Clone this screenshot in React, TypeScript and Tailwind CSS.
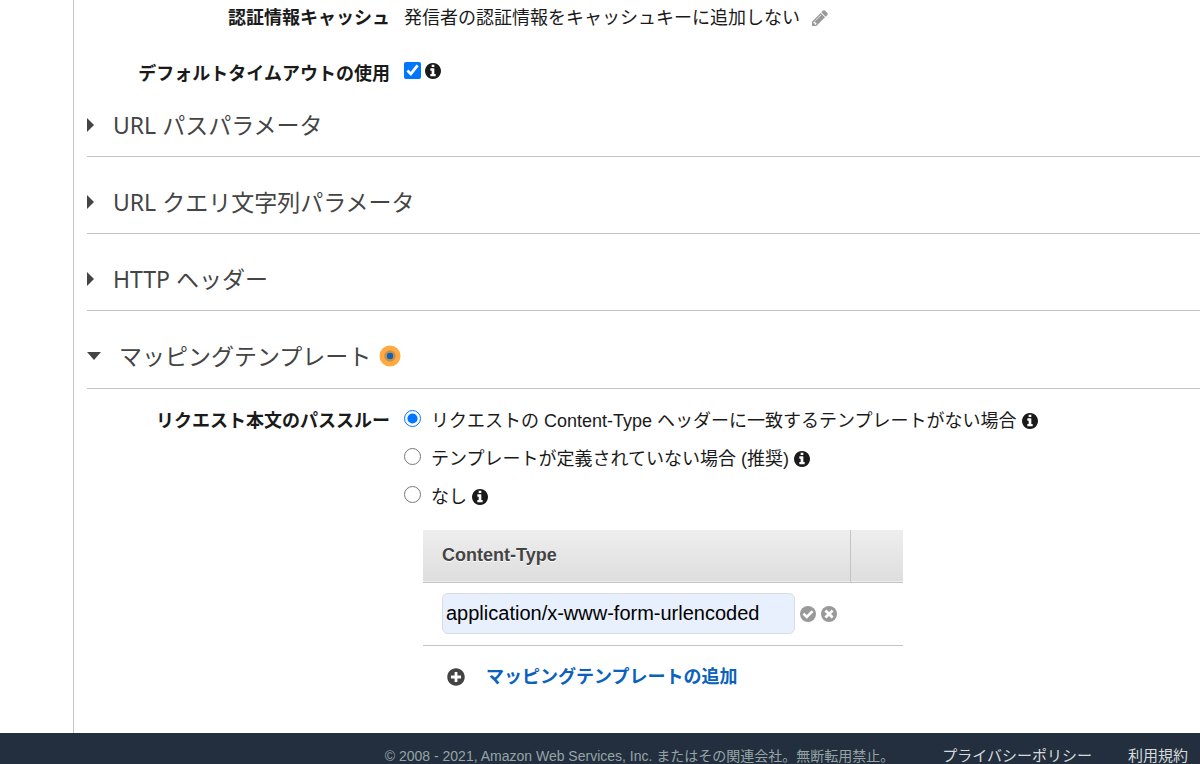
import { useState } from "react";
import type { JSX, ReactNode } from "react";
import { FaPlusCircle } from "react-icons/fa";

const passthroughOptions = [
    { id: "no-match", text: "リクエストの Content-Type ヘッダーに一致するテンプレートがない場合" },
    { id: "no-templates", text: "テンプレートが定義されていない場合 (推奨)" },
    { id: "never", text: "なし" },
];

function InfoButton(): JSX.Element {
    return (
        <button type="button" aria-label="情報" className="shrink-0 text-[#1a1a1a]">
            <svg viewBox="0 0 1536 1536" className="size-4" fill="currentColor">
                <path d="M1024 1248v-160q0-14-9-23t-23-9h-96v-512q0-14-9-23t-23-9h-320q-14 0-23 9t-9 23v160q0 14 9 23t23 9h96v320h-96q-14 0-23 9t-9 23v160q0 14 9 23t23 9h448q14 0 23-9t9-23zm-128-896v-160q0-14-9-23t-23-9h-192q-14 0-23 9t-9 23v160q0 14 9 23t23 9h192q14 0 23-9t9-23zm640 416q0 209-103 385.5t-279.5 279.5-385.5 103-385.5-103-279.5-279.5-103-385.5 103-385.5 279.5-279.5 385.5-103 385.5 103 279.5 279.5 103 385.5z" />
            </svg>
        </button>
    );
}

function Collapsed({ children }: { children: ReactNode }): JSX.Element {
    return (
        <h2 className="border-b border-[#c4c4c4] pb-[18px] text-[23px] leading-[26px]">
            <button type="button" aria-expanded="false" className="flex items-center">
                <svg viewBox="0 0 7 14" className="mr-[19px] h-3.5 w-[7px]" fill="currentColor">
                    <path d="M0 0 7 7 0 14z" />
                </svg>
                {children}
            </button>
        </h2>
    );
}

function Integration(): JSX.Element {
    const [passthrough, setPassthrough] = useState("no-match");

    return (
        <main className="ml-[73px] border-l border-[#c4c4c4] pt-1.5 pb-11 pl-[13px]">
            <div className="flex leading-6">
                <div className="w-[303px] shrink-0 text-right font-bold">認証情報キャッシュ</div>
                <div className="ml-3.5 flex items-center gap-3">
                    発信者の認証情報をキャッシュキーに追加しない
                    <button type="button" aria-label="編集" className="text-[#999]">
                        <svg viewBox="0 0 1536 1536" className="size-4" fill="currentColor">
                            <path d="M363 1408l91-91-235-235-91 91v107h128v128h107zm523-928q0-22-22-22-10 0-17 7l-542 542q-7 7-7 17 0 22 22 22 10 0 17-7l542-542q7-7 7-17zm-54-192l416 416-832 832h-416v-416zm683 96q0 53-37 90l-166 166-416-416 166-165q36-38 90-38 53 0 91 38l235 234q37 39 37 91z" />
                        </svg>
                    </button>
                </div>
            </div>
            <div className="mt-8 flex leading-6">
                <label htmlFor="timeout" className="w-[303px] shrink-0 text-right font-bold">デフォルトタイムアウトの使用</label>
                <div className="ml-3.5 flex h-[17px] items-end gap-1">
                    <input id="timeout" type="checkbox" defaultChecked className="size-[17px] accent-[#0075ff]" />
                    <InfoButton />
                </div>
            </div>

            <div className="mt-[26px] flex flex-col gap-8 text-[#444]">
                <Collapsed>URL パスパラメータ</Collapsed>
                <Collapsed>URL クエリ文字列パラメータ</Collapsed>
                <Collapsed>HTTP ヘッダー</Collapsed>
                <h2 className="flex items-center border-b border-[#c4c4c4] pb-[19px] text-[23px] leading-[26px]">
                    <button type="button" aria-expanded="true" className="flex items-center">
                        <svg viewBox="0 0 14 8" className="mr-[18px] h-2 w-3.5" fill="currentColor">
                            <path d="M0 0h14L7 8z" />
                        </svg>
                        マッピングテンプレート
                    </button>
                    <svg viewBox="0 0 22 22" className="ml-2 size-[22px]">
                        <circle cx="11" cy="11" r="10.5" fill="#ffab40" />
                        <circle cx="11" cy="11" r="5.8" fill="#c98f4c" />
                        <circle cx="11" cy="11" r="3.2" fill="#0a62bd" />
                    </svg>
                </h2>
            </div>

            <div role="radiogroup" aria-labelledby="passthrough" className="mt-5 flex leading-6">
                <div id="passthrough" className="w-[303px] shrink-0 text-right font-bold">リクエスト本文のパススルー</div>
                <div className="ml-3.5 flex flex-col gap-3.5">
                    {passthroughOptions.map((option) => (
                        <div key={option.id} className="flex items-center gap-[5px]">
                            <label className="flex items-start gap-2.5">
                                <input
                                    type="radio"
                                    name="passthrough"
                                    checked={passthrough === option.id}
                                    onChange={() => setPassthrough(option.id)}
                                    className="mt-px size-[17px] accent-[#0075ff]"
                                />
                                {option.text}
                            </label>
                            <InfoButton />
                        </div>
                    ))}
                </div>
            </div>

            <div className="mt-[21px] ml-[336px] w-[480px]">
                <table className="w-full border-collapse">
                    <thead>
                        <tr className="h-[52px] border-b border-[#c4c4c4] bg-linear-to-b from-[#eee] to-[#dedede]">
                            <th className="pl-[19px] text-left text-[#444] text-shadow-[0_1px_0_#fff]">Content-Type</th>
                            <th className="w-[53px] border-l border-[#c4c4c4]"></th>
                        </tr>
                    </thead>
                    <tbody>
                        <tr className="h-[63px] border-b border-[#c4c4c4]">
                            <td colSpan={2} className="pl-[19px]">
                                <div className="flex items-center gap-[5px] text-[#999]">
                                    <input
                                        type="text"
                                        aria-label="Content-Type"
                                        defaultValue="application/x-www-form-urlencoded"
                                        className="h-[41px] w-[353px] rounded-md border border-[#d8dce4] bg-[#e8f0fe] px-[3px] text-xl text-black"
                                    />
                                    <button type="button" aria-label="保存">
                                        <svg viewBox="0 0 16 16" className="size-4">
                                            <circle cx="8" cy="8" r="8" fill="currentColor" />
                                            <path d="m3.4 7.6 3.4 3.4 5.8-5.8" fill="none" stroke="#fff" strokeWidth="2.6" />
                                        </svg>
                                    </button>
                                    <button type="button" aria-label="キャンセル">
                                        <svg viewBox="0 0 16 16" className="size-4">
                                            <circle cx="8" cy="8" r="8" fill="currentColor" />
                                            <path d="m4.4 4.4 7.2 7.2m0-7.2-7.2 7.2" fill="none" stroke="#fff" strokeWidth="2.8" />
                                        </svg>
                                    </button>
                                </div>
                            </td>
                        </tr>
                    </tbody>
                </table>
                <a href="#add" className="mt-[19px] ml-6 flex items-center gap-[21px] leading-6 font-bold text-[#0a62bd]">
                    <FaPlusCircle className="size-[18px] text-[#444]" />
                    マッピングテンプレートの追加
                </a>
            </div>
        </main>
    );
}

export default function App(): JSX.Element {
    return (
        <div className="flex h-screen flex-col overflow-hidden bg-white font-['Liberation_Sans','Noto_Sans_CJK_JP',sans-serif] text-[18px] text-[#1a1a1a] [&_h2]:font-['Noto_Sans','Noto_Sans_CJK_JP',sans-serif]">
            <Integration />
            <footer className="flex grow items-start justify-end bg-[#232f3e] pt-[11px] pr-3 leading-6 whitespace-nowrap text-[#d5dbdb]">
                <span className="text-[14px] leading-6 text-[#95a5a6]">© 2008 - 2021, Amazon Web Services, Inc. またはその関連会社。無断転用禁止。</span>
                <a href="#privacy" className="ml-12 text-[15px]">プライバシーポリシー</a>
                <a href="#terms" className="ml-9 text-[15px]">利用規約</a>
            </footer>
        </div>
    );
}
